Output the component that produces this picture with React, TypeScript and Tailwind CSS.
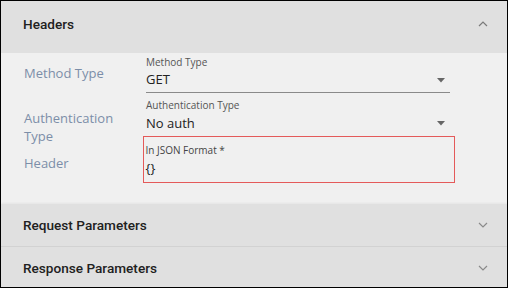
import React from 'react';

const ChevronUp = () => (
  <svg width="10" height="6" viewBox="0 0 10 6" fill="none">
    <polyline points="1,5 5,1 9,5" stroke="#7a7a7a" strokeWidth="1.2" />
  </svg>
);

const ChevronDown = () => (
  <svg width="10" height="6" viewBox="0 0 10 6" fill="none">
    <polyline points="1,1 5,5 9,1" stroke="#8a8a8a" strokeWidth="1.2" />
  </svg>
);

const Caret = () => (
  <svg width="8" height="5" viewBox="0 0 8 5">
    <polygon points="0,0 8,0 4,4.5" fill="#666" />
  </svg>
);

const SectionHeader = ({ title, open, className }: { title: string; open?: boolean; className?: string }) => (
  <div className={`flex items-center justify-between pl-[22px] pr-[19px] bg-[#e0e0e0] ${className ?? ''}`}>
    <span className="text-[13.6px] font-medium text-[#212121] font-['Roboto',sans-serif]">{title}</span>
    {open ? <ChevronUp /> : <ChevronDown />}
  </div>
);

const App: React.FC = () => {
  return (
    <div className="w-[508px] h-[288px] border border-black overflow-hidden bg-[#f0f0f0] font-['Open_Sans',sans-serif]">
      <SectionHeader title="Headers" open className="h-[52px] pb-[6px]" />

      {/* Headers body */}
      <div className="h-[151px] bg-[#f0f0f0] flex pl-[23px]">
        {/* left labels */}
        <div className="w-[122px] flex flex-col text-[13px] text-[#7c8ea8]">
          <span className="mt-[11px] leading-[18px]">Method Type</span>
          <span className="mt-[27px] leading-[18px] w-[100px]">Authentication Type</span>
          <span className="mt-[9px] leading-[18px]">Header</span>
        </div>

        {/* fields */}
        <div className="flex flex-col">
          <div className="mt-[3px] w-[304px]">
            <div className="text-[10px] leading-[12px] text-[#555]">Method Type</div>
            <div className="h-[25px] flex items-center justify-between border-b border-[#8a8a8a] pr-[5px]">
              <span className="text-[13px] text-[#222]">GET</span>
              <Caret />
            </div>
          </div>

          <div className="mt-[6px] w-[304px]">
            <div className="text-[10px] leading-[12px] text-[#555]">Authentication Type</div>
            <div className="h-[25px] flex items-center justify-between pr-[5px]">
              <span className="text-[13px] text-[#222]">No auth</span>
              <Caret />
            </div>
          </div>

          <div className="-ml-[3px] w-[312px] h-[47px] border-[1.5px] border-[#e45a5a] pl-[1.5px] pt-[7px]">
            <div className="text-[10px] leading-[12px] text-[#444]">In JSON Format *</div>
            <div className="mt-[3px] text-[13px] leading-[18px] text-[#222]">{'{}'}</div>
          </div>
        </div>
      </div>

      <SectionHeader
        title="Request Parameters"
        className="h-[43px] border-b border-[#d2d2d2] shadow-[0_-1px_2px_rgba(0,0,0,0.05)]"
      />
      <SectionHeader title="Response Parameters" className="h-[40px] pt-[2px]" />
    </div>
  );
};

export default App;
